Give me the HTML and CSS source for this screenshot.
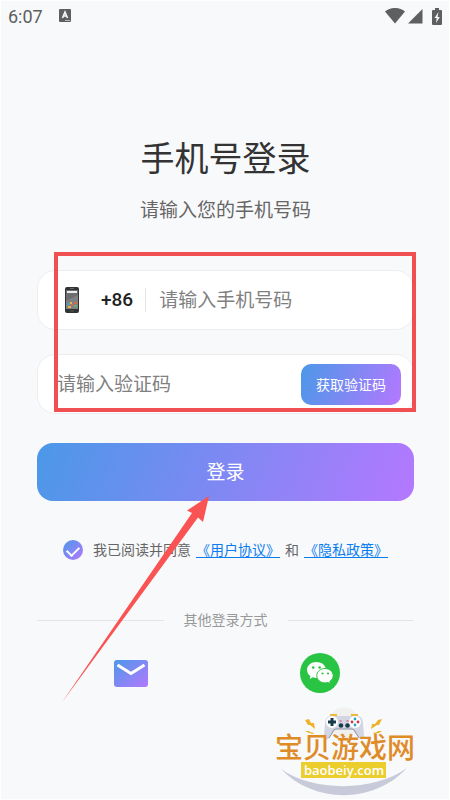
FILE: index.html
```html
<!DOCTYPE html>
<html lang="zh-CN">
<head>
    <meta charset="UTF-8">
    <meta name="viewport" content="width=device-width, initial-scale=1.0">
    <title>手机号登录</title>
    <link rel="stylesheet" href="styles.css">
</head>
<body>

<div class="app">
    <header class="status-bar">
        <span>6:07</span>
        <svg class="status-app" width="12" height="14" viewBox="0 0 12 14" aria-hidden="true">
            <rect width="12" height="13" rx="1" fill="#5d5f60"/>
            <path d="M3.500 9 6 3 8.500 9M4.500 7h3" fill="none" stroke="#f8f9fb" stroke-width="1.600"/>
            <path d="M6 11.500h5" stroke="#b5b7b9"/>
        </svg>
        <div class="status-icons">
            <svg width="20" height="16" viewBox="0 0 20 16" aria-hidden="true">
                <path d="M0 3.500C6-1.200 14-1.200 20 3.500L10 15.500z" fill="#5d5f60"/>
            </svg>
            <svg width="15" height="15" viewBox="0 0 15 15" aria-hidden="true">
                <path d="M14.500 0v14.500H0z" fill="#5d5f60"/>
            </svg>
            <svg class="battery" width="10" height="17" viewBox="0 0 10 17" aria-hidden="true">
                <path d="M3 0h4v2h2q1 0 1 1v13q0 1-1 1H1q-1 0-1-1V3q0-1 1-1h2z" fill="#5d5f60"/>
                <path d="M6.500 4 2.500 10h2.200L4 15l3.800-6H5.500z" fill="#f8f9fb"/>
            </svg>
        </div>
    </header>

    <main class="login">
        <h1 class="title">手机号登录</h1>
        <p class="subtitle">请输入您的手机号码</p>

        <form class="form">
            <div class="fields">
                <div class="field phone-field">
                    <svg class="phone-icon" width="24" height="28" viewBox="0 0 24 28" aria-hidden="true">
                        <rect x="5" y="1" width="14" height="26" rx="2" fill="#303234"/>
                        <rect x="6" y="4" width="12" height="19" fill="#6c6d6e"/>
                        <path d="M6 15 18 9v14H6z" fill="#7f8081"/>
                        <rect x="7" y="5" width="10" height="2" fill="#eee"/>
                        <path d="M10 2.500h4" stroke="#666"/>
                        <path d="M7 17h3v2H7z" fill="#4d9bd5"/>
                        <path d="M10 16h2v2h-2zM8 20h3v2H8z" fill="#e7b647"/>
                        <path d="M14 16h3v2h-3zM11 18h2v2h-2z" fill="#df654f"/>
                        <path d="M14 19h3v2h-3z" fill="#68b36b"/>
                        <path d="M10 25h4" stroke="#555"/>
                    </svg>
                    <label class="prefix" for="phone">+86</label>
                    <input class="input" id="phone" type="tel" placeholder="请输入手机号码">
                </div>
                <div class="field code-field">
                    <input class="input" id="code" type="text" inputmode="numeric" aria-label="验证码" placeholder="请输入验证码">
                    <button class="code-btn" type="button">获取验证码</button>
                </div>
                <div class="highlight"></div>
            </div>

            <div class="actions">
                <button class="login-btn" type="submit">登录</button>
                <div class="agreement">
                    <input class="agree-check" id="agree" type="checkbox" checked>
                    <label for="agree">我已阅读并同意</label>
                    <a href="#">《用户协议》</a>
                    <span>和</span>
                    <a href="#">《隐私政策》</a>
                </div>
                <svg class="arrow" width="152" height="212" viewBox="60 494 152 212" aria-hidden="true">
                    <path d="M209 496 187 510.500 192 513 61.500 703 198 517.500 203 522z" fill="#f95453"/>
                </svg>
            </div>
        </form>

        <div class="divider">其他登录方式</div>

        <div class="socials">
            <button class="social" type="button" aria-label="邮箱登录">
                <svg width="34" height="27" viewBox="0 0 34 27">
                    <defs>
                        <linearGradient id="mail" x1="0" y1="0" x2="1" y2="1">
                            <stop offset="0" stop-color="#4b98e8"/>
                            <stop offset="1" stop-color="#b478ff"/>
                        </linearGradient>
                    </defs>
                    <rect width="34" height="27" rx="3" fill="url(#mail)"/>
                    <path d="M3.500 5 17 13.500 30.500 5" fill="none" stroke="#fff" stroke-width="3"/>
                </svg>
            </button>
            <button class="social" type="button" aria-label="微信登录">
                <svg width="40" height="40" viewBox="0 0 40 40">
                    <circle cx="20" cy="20" r="20" fill="#2ac445"/>
                    <path d="M16.500 9C11.200 9 7 12.500 7 17c0 2.600 1.400 4.800 3.500 6.200l-.8 2.800 3.200-1.700c1.100.4 2.400.6 3.600.6 5.300 0 9.500-3.500 9.500-7.900S21.800 9 16.500 9z" fill="#fff"/>
                    <path d="M25 15.500c-4.500 0-8.200 3.200-8.200 7.200s3.700 7.200 8.200 7.200c1 0 2-.2 2.900-.5l2.600 1.400-.7-2.400c2-1.300 3.400-3.400 3.400-5.700 0-4-3.700-7.200-8.200-7.200z" fill="#fff" stroke="#2ac445"/>
                    <g fill="#2ac445">
                        <circle cx="13.200" cy="14.500" r="1.300"/>
                        <circle cx="19.600" cy="14.500" r="1.300"/>
                        <circle cx="22.500" cy="20.500" r="1.100"/>
                        <circle cx="28" cy="20.500" r="1.100"/>
                    </g>
                </svg>
            </button>
        </div>
    </main>

    <svg class="brand" width="146" height="92" viewBox="272 706 146 92">
        <circle cx="344" cy="723" r="15.500" fill="#f0f0ef"/>
        <path d="M281 769C313 792 374 792 407 768C374 804 314 804 281 769z" fill="#c9cad9"/>
        <!-- геймпад -->
        <path d="M330 715h7M351 715h7" stroke="#edb83c" stroke-width="2"/>
        <path d="M331 716h26c4 0 6 3 6 8l1 11c0 4-3 6-5 3l-5-8q-1-1-3-1h-14q-2 0-3 1l-5 8c-2 3-5 1-5-3l1-11c0-5 2-8 6-8z" fill="#d3d5e3"/>
        <path d="M359 738l-5-8q-1-1-3-1h-14q-2 0-3 1l-5 8" fill="none" stroke="#8d8e9f"/>
        <circle cx="332" cy="722" r="6" fill="#fff"/>
        <circle cx="355" cy="722" r="6" fill="#fff"/>
        <path d="M332 718v8M328 722h8" stroke="#173b4c" stroke-width="3"/>
        <circle cx="341" cy="725.500" r="2.300" fill="#173b4c"/>
        <circle cx="347.500" cy="725.500" r="2.300" fill="#173b4c"/>
        <path d="M339.500 721h2M346.500 721h2" stroke="#d33b62"/>
        <circle cx="355" cy="719" r="1.400" fill="#26a2bd"/>
        <circle cx="355" cy="725" r="1.400" fill="#26a2bd"/>
        <circle cx="352" cy="722" r="1.400" fill="#d3344a"/>
        <circle cx="358" cy="722" r="1.400" fill="#d3344a"/>
        <g fill="#eeb32c">
            <path d="M305 720l4-1 2 4 3 0 1 6-5-4-2 0z"/>
            <path d="M305 731l4 0 1 1 4 1-1 1-4-1z"/>
            <path d="M382 719l-4 1-3 4h-3l-1 5 6-4h2z"/>
            <path d="M382 731h-4l-1 1-4 1 1 1 5-1z"/>
        </g>
        <text class="brand-name" x="345" y="758" text-anchor="middle">宝贝游戏网</text>
        <rect x="301" y="762" width="85" height="16" fill="#ebcd2e"/>
        <text class="brand-url" x="344" y="775" text-anchor="middle">baobeiy.com</text>
    </svg>
</div>

</body>
</html>
```
FILE: styles.css
```css
* {
    box-sizing: border-box;
}

body, html {
    margin: 0;
    padding: 0;
    font-family: Roboto, "Noto Sans CJK SC", sans-serif;
}

button, input {
    font-family: inherit;
}

svg {
    display: block;
    flex-shrink: 0;
}

.app {
    position: relative;
    min-height: 100vh;
    background: #f8f9fb;
    border: 1px solid #fff;
}

/* Status bar */
.status-bar {
    display: flex;
    align-items: center;
    height: 30px;
    padding: 0 7px;
    font-size: 18px;
    color: #5d5f60;
}

.status-app {
    margin-left: 16px;
}

.status-icons {
    display: flex;
    align-items: center;
    gap: 3px;
    margin-left: auto;
}

.battery {
    margin-left: 6px;
}

.login {
    padding: 105px 35px 0 36px;
}

.title {
    margin: 0;
    font-size: 34px;
    line-height: 46px;
    font-weight: 400;
    text-align: center;
    color: #333;
}

.subtitle {
    margin: 15px 0 0;
    font-size: 19px;
    line-height: 28px;
    text-align: center;
    color: #666;
}

/* Form */
.form {
    margin-top: 45px;
}

.fields {
    position: relative;
    display: flex;
    flex-direction: column;
    gap: 24px;
}

.field {
    display: flex;
    align-items: center;
    height: 60px;
    background: #fff;
    border: 1px solid #ecedef;
    border-radius: 18px;
}

.phone-field {
    padding: 0 20px 0 22px;
}

.code-field {
    padding: 0 12px 0 19px;
}

.prefix {
    margin-left: 17px;
    padding-right: 12px;
    border-right: 1px solid #e6e6e6;
    font-size: 19px;
    line-height: 24px;
    font-weight: 500;
    color: #222;
}

.input {
    flex: 1;
    min-width: 0;
    padding: 2px 0 0;
    border: none;
    outline: none;
    background: none;
    font-size: 19px;
    line-height: 28px;
    color: #333;
}

.phone-field .input {
    margin-left: 13px;
}

.input::placeholder {
    color: #808080;
}

.code-btn {
    height: 41px;
    padding: 0 15px;
    border: none;
    border-radius: 10px;
    background: linear-gradient(110deg, #4b98e8, #b478ff);
    font-size: 14px;
    color: #fff;
    cursor: pointer;
}

.highlight {
    position: absolute;
    top: -18px;
    right: -2px;
    bottom: 2px;
    left: 17px;
    border: 4px solid #f05051;
    pointer-events: none;
}

.actions {
    position: relative;
    margin-top: 29px;
}

.login-btn {
    display: block;
    width: 100%;
    height: 58px;
    padding: 0 0 4px;
    border: none;
    border-radius: 16px;
    background: linear-gradient(110deg, #4b98e8, #b478ff);
    font-size: 19px;
    color: #fff;
    cursor: pointer;
}

.agreement {
    display: flex;
    align-items: center;
    justify-content: center;
    gap: 5px;
    margin-top: 38px;
    font-size: 14px;
    line-height: 22px;
    color: #666;
}

.agreement a {
    color: #087cf0;
    text-underline-offset: 2px;
}

.agree-check {
    display: flex;
    justify-content: center;
    width: 20px;
    height: 20px;
    margin: 0 5px 0 0;
    appearance: none;
    border-radius: 50%;
    background: linear-gradient(135deg, #4b98e8, #b478ff);
}

.agree-check:checked::after {
    content: "";
    width: 6px;
    height: 10px;
    margin-top: 4px;
    border: solid #fff;
    border-width: 0 2px 2px 0;
    transform: rotate(45deg);
}

.arrow {
    position: absolute;
    top: 51px;
    right: 50%;
    margin-right: 14px;
    pointer-events: none;
}

/* Other ways to sign in */
.divider {
    display: flex;
    align-items: center;
    gap: 20px;
    margin-top: 48px;
    font-size: 14px;
    line-height: 22px;
    color: #999;
}

.divider::before,
.divider::after {
    content: "";
    flex: 1;
    height: 1px;
    background: #e3e4e6;
}

.socials {
    display: grid;
    grid-template-columns: 1fr 1fr;
    justify-items: center;
    margin-top: 22px;
}

.social {
    display: flex;
    align-items: center;
    justify-content: center;
    width: 40px;
    height: 40px;
    padding: 0;
    border: none;
    background: none;
    cursor: pointer;
}

/* Site logo */
.brand {
    position: absolute;
    right: 31px;
    bottom: 1px;
}

.brand-name {
    font-family: "Noto Sans CJK SC", sans-serif;
    font-size: 28px;
    font-weight: 500;
    fill: #df8b27;
}

.brand-url {
    font-family: "Open Sans", sans-serif;
    font-size: 13px;
    font-weight: 600;
    fill: #fff;
}
```
